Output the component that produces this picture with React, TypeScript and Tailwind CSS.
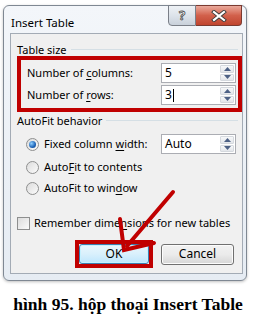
import React from 'react';

const ui = "font-['Noto_Sans',sans-serif] text-[11px] text-black";

const Spinner = () => (
  <div className="flex flex-col h-full w-[15px] py-[1px] pr-[1px] gap-[1px]">
    {[0, 1].map((i) => (
      <div
        key={i}
        className="flex-1 flex items-center justify-center border border-[#d5d9de] bg-gradient-to-b from-[#f7f8f9] to-[#e3e6ea] rounded-[1px]"
      >
        <svg width="7" height="4" viewBox="0 0 7 4">
          {i === 0 ? <path d="M0 4 L3.5 0 L7 4 Z" fill="#4d6185" /> : <path d="M0 0 L3.5 4 L7 0 Z" fill="#4d6185" />}
        </svg>
      </div>
    ))}
  </div>
);

const NumInput = ({ value, caret = false }: { value: string; caret?: boolean }) => (
  <div className="w-[75px] h-[20px] border border-[#abadb3] bg-white flex items-stretch">
    <div className="flex-1 flex items-center pl-[3px] text-[12px] leading-none">
      {value}
      {caret && <span className="inline-block w-px h-[13px] bg-black ml-[1px]" />}
    </div>
    <Spinner />
  </div>
);

const Radio = ({ checked = false }: { checked?: boolean }) => (
  <div className="w-[13px] h-[13px] rounded-full border border-[#8e8f8f] bg-gradient-to-br from-[#dcdcdc] to-[#fbfbfb] flex items-center justify-center shrink-0">
    {checked && (
      <div className="w-[7px] h-[7px] rounded-full bg-[radial-gradient(circle_at_35%_35%,#8fd0ff,#1c63b7_60%,#0f3f80)]" />
    )}
  </div>
);

const GroupLabel = ({ children }: { children: React.ReactNode }) => (
  <div className="flex items-center h-[14px] ml-[6px]">
    <span className="leading-none">{children}</span>
    <div className="flex-1 h-px bg-[#d5dfe5] ml-[4px] mr-[4px]" />
  </div>
);

const U = ({ children }: { children: React.ReactNode }) => <span className="underline underline-offset-2">{children}</span>;

export default function App() {
  return (
    <div className={`relative w-[256px] h-[323px] bg-white overflow-hidden ${ui}`}>
      <div className="pt-[5px] pl-[3px]">
        {/* window frame */}
        <div className="w-[244px] h-[276px] rounded-[6px] border border-[#7f8893] bg-gradient-to-b from-[#f3f6fa] to-[#e6ecf3] flex flex-col pl-[6px] pr-[3px] pb-[6px] shadow-[0_1px_3px_rgba(0,0,0,0.25)]">
          <div className="h-[27px] flex items-start justify-between">
            <span className="pt-[8px] pl-[1px] text-[11.5px]">Insert Table</span>
            <div className="flex -mt-[1px] mr-[1px]">
              <div className="w-[28px] h-[21px] border border-[#7a7f88] rounded-bl-[4px] bg-gradient-to-b from-[#eef1f5] via-[#dde3ea] to-[#c9d1db] flex items-center justify-center">
                <span className="text-[13px] font-bold leading-none text-white [-webkit-text-stroke:0.8px_#4a4a4a]">?</span>
              </div>
              <div className="w-[46px] h-[21px] border border-l-0 border-[#7a3a30] rounded-br-[4px] bg-gradient-to-b from-[#e9a99c] via-[#d2604b] to-[#c0452f] flex items-center justify-center">
                <svg width="16" height="12" viewBox="0 0 16 12">
                  <path d="M3 2 L13 10 M13 2 L3 10" stroke="#3b3b3b" strokeWidth="4" strokeLinecap="square" />
                  <path d="M3 2 L13 10 M13 2 L3 10" stroke="#ffffff" strokeWidth="2.2" strokeLinecap="square" />
                </svg>
              </div>
            </div>
          </div>

          {/* client area */}
          <div className="flex-1 border border-[#a3abb5] bg-[#f0f0f0] flex flex-col pt-[8px]">
            <GroupLabel>Table size</GroupLabel>

            <div className="ml-[6px] border-4 border-[#c00000] flex flex-col gap-[2px] pt-[3px] pb-[3px] pl-[6px] pr-[2px]">
              <div className="flex items-center justify-between">
                <span>Number of <U>c</U>olumns:</span>
                <NumInput value="5" />
              </div>
              <div className="flex items-center justify-between">
                <span>Number of <U>r</U>ows:</span>
                <NumInput value="3" caret />
              </div>
            </div>

            <div className="mt-[1px]">
              <GroupLabel>AutoFit behavior</GroupLabel>
            </div>

            <div className="flex items-center mt-[7px] ml-[15px] mr-[6px]">
              <Radio checked />
              <span className="ml-[5px] flex-1">Fixed column <U>w</U>idth:</span>
              <NumInput value="Auto" />
            </div>
            <div className="flex items-center h-[16px] mt-[5px] ml-[15px]">
              <Radio />
              <span className="ml-[5px]">Auto<U>F</U>it to contents</span>
            </div>
            <div className="flex items-center h-[16px] mt-[5px] ml-[15px]">
              <Radio />
              <span className="ml-[5px]">AutoFit to win<U>d</U>ow</span>
            </div>

            <div className="flex items-center h-[14px] mt-[20px] ml-[6px]">
              <div className="w-[13px] h-[13px] border border-[#8e8f8f] bg-gradient-to-br from-[#dcdcdc] to-[#fbfbfb] shrink-0" />
              <span className="ml-[4px]">Remember dime<U>n</U>sions for new tables</span>
            </div>

            <div className="flex items-center mt-[10px] ml-[64px]">
              <div className="border-4 border-[#c00000]">
                <div className="w-[70px] h-[20px] rounded-[3px] border border-[#3c7fb1] bg-gradient-to-b from-[#eaf6fd] via-[#d9f0fc] to-[#bee6fd] shadow-[inset_0_0_0_1px_#c6f1ff] flex items-center justify-center text-[12px]">
                  OK
                </div>
              </div>
              <div className="ml-[8px] w-[73px] h-[21px] rounded-[3px] border border-[#707070] bg-gradient-to-b from-[#f2f2f2] via-[#ebebeb] to-[#d6d6d6] shadow-[inset_0_0_0_1px_#fcfcfc] flex items-center justify-center text-[12px]">
                Cancel
              </div>
            </div>
          </div>
        </div>
      </div>

      <div className="mt-[13px] text-center font-['Liberation_Serif',serif] font-bold text-[17.5px] leading-[20px]">
        hình 95. hộp thoại Insert Table
      </div>

      {/* red annotation arrow */}
      <svg className="absolute inset-0 pointer-events-none" width="256" height="323" viewBox="0 0 256 323">
        <path d="M173 192 L127 246" stroke="#c00000" strokeWidth="4" strokeLinecap="round" />
        <path d="M120 219 L124 250 L154 243" stroke="#c00000" strokeWidth="4" fill="none" strokeLinejoin="miter" strokeLinecap="round" />
      </svg>
    </div>
  );
}
